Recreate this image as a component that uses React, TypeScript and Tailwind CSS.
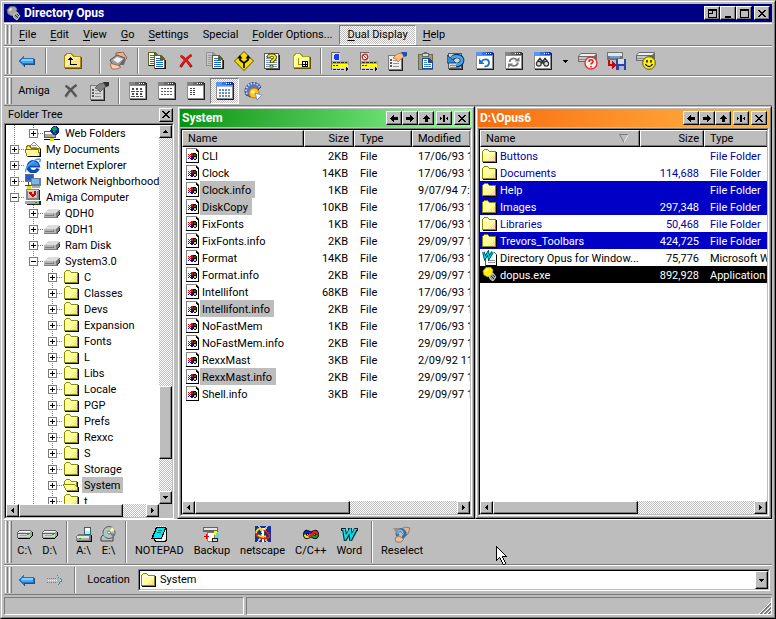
import React from "react";

type Palette = Record<string, string>;

/* Draws a small bitmap from rows of characters; runs of one colour become one rect. */
function Pixels({ rows, palette, className = "" }: { rows: string[]; palette: Palette; className?: string }) {
  const w = Math.max(...rows.map((r) => r.length));
  const rects: React.ReactNode[] = [];
  rows.forEach((row, y) => {
    let x = 0;
    while (x < row.length) {
      const c = row[x];
      let end = x + 1;
      while (end < row.length && row[end] === c) end++;
      if (palette[c]) rects.push(<rect key={`${x}-${y}`} x={x} y={y} width={end - x} height={1} fill={palette[c]} />);
      x = end;
    }
  });
  return (
    <svg width={w} height={rows.length} viewBox={`0 0 ${w} ${rows.length}`} shapeRendering="crispEdges" aria-hidden="true" className={`shrink-0 ${className}`}>
      {rects}
    </svg>
  );
}

function Art({ w, h, children, smooth = false }: { w: number; h: number; children: React.ReactNode; smooth?: boolean }) {
  return (
    <svg width={w} height={h} viewBox={`0 0 ${w} ${h}`} shapeRendering={smooth ? "auto" : "crispEdges"} aria-hidden="true" className="shrink-0">
      {children}
    </svg>
  );
}

const folderPalette = { o: "#8c8c00", y: "#ffff9c", p: "#ffd6a5", w: "#ffffde", k: "#000000" };

const Folder = () => (
  <Pixels
    palette={folderPalette}
    rows={[
      "..oooo.........",
      ".oyyyyo........",
      "oyyyyyyooooooo.",
      "owwwwwwwwwwwyok",
      "owyyyyyyyyyyyok",
      "owyyyyyyyyyyyok",
      "owyyyyyyyyypyok",
      "owyyyyyyyypypok",
      "owyyyyyyypyppok",
      "owyyyyyypypppok",
      "owyyyyypypyppok",
      "owyyyypypppppok",
      "ooooooooooooook",
      ".kkkkkkkkkkkkkk",
    ]}
  />
);

const OpenFolder = () => (
  <Pixels
    palette={folderPalette}
    rows={[
      "...oooo.........",
      "..oyyyyo........",
      ".oyyyyyyoooooo..",
      ".oyyyyyyyyyyyok.",
      ".oyyyyyyyyyyyok.",
      "ooooooooooooyok.",
      "owwwwwwwwwwwook.",
      ".oyyyyyyyyyypok.",
      ".owyyyyyyyypypok",
      "..oyyyyyyypyppok",
      "..owyyyyypyyppok",
      "...ooooooooooook",
      "....kkkkkkkkkkkk",
    ]}
  />
);

/* The tree shows a borderless drive; the launch bar shows one with a dark outline. */
const Drive = () => (
  <Pixels
    palette={{ l: "#dedede", m: "#b5b5b5", d: "#7b7b7b", k: "#313131", g: "#00d600" }}
    rows={[
      "....lllllllllll.",
      "...lllllllllllmd",
      "..lllllllllllmdd",
      ".lllllllllllmddk",
      "mmmmmmmmmmmmdddk",
      "mmmmmmmmmgmmdddk",
      "mdddddddddmmddk.",
      "mmmmmmmmmmmmdk..",
      "dddddddddddddd..",
    ]}
  />
);

const OutlinedDrive = () => (
  <Pixels
    palette={{ w: "#ffffff", l: "#d6d6d6", m: "#a5a5a5", d: "#636363", k: "#000000", g: "#00c600" }}
    rows={[
      "..dddddddddddd..",
      ".dwwwwwwwwwwwld.",
      "dwlllllllllllmmk",
      "dddddddddddddmmk",
      "dlllllllllgglmmk",
      "dllmmmmmmmlllmmk",
      "dllllllllllllmk.",
      "dmmmmmmmmmmmmk..",
      ".kkkkkkkkkkkk...",
    ]}
  />
);

const FileIcon = () => (
  <Pixels
    palette={{ m: "#848484", w: "#ffffff", k: "#000000", r: "#e70000", b: "#0000de", g: "#007b00", y: "#dede00", d: "#420042" }}
    rows={[
      "mmmmmmmmmmm..",
      "mwwwwwwwwwkm.",
      "mwwwwwwwwwkkm",
      "mwwwwwwwwwwkk",
      "mwwwwwwwwwwwk",
      "mwwwwrrkkkwwk",
      "mwrwrrrkggkwk",
      "mwwrwrrdggkwk",
      "mwrwrdddkkkwk",
      "mwwbwbbkyykwk",
      "mwbwbbbkyykwk",
      "mwwwwbbwkkwwk",
      "mwwwwwwwwwwwk",
      "mwwwwwwwwwwwk",
      "kkkkkkkkkkkkk",
    ]}
  />
);

const BackArrow = () => (
  <Art w={17} h={13}>
    <path d="M0 6L6 0V3H16V9H6V12Z" fill="#2173c6" />
    <path d="M2 6L5 3V4H15V6Z" fill="#84ceff" />
    <path d="M2 6H15V8H5V9Z" fill="#4aa5ef" />
    <path d="M6 9H16V10H7V12H6ZM16 4H17V10H16Z" fill="#314a73" />
  </Art>
);

const ForwardArrow = () => (
  <Art w={17} h={13}>
    <path d="M0 4.500H10M0 8.500H10" stroke="#7b7b7b" strokeDasharray="1 1" fill="none" />
    <path d="M1 6.500H15" stroke="#ffffff" strokeDasharray="1 1" />
    <path d="M10 1.500L15 6.500L10 11.500" stroke="#4a8c8c" strokeDasharray="1 1" fill="none" />
    <path d="M10 3L13 6L10 9Z" fill="#9cbdc6" />
  </Art>
);

const UpFolder = () => (
  <Art w={19} h={16}>
    <path d="M1 3L3 0H9L11 3H18V15H1Z" fill="#a58c18" />
    <path d="M2 4L4 1H8L10 4H17V14H2Z" fill="#ffef9c" />
    <path d="M2 14L17 4V14Z" fill="#ffde8c" />
    <path d="M18 4H19V16H2V15H18Z" fill="#63520a" />
    <path d="M5 7L7.500 4L10 7H8V11H14V12H7V7Z" fill="#000" />
  </Art>
);

const FolderTree = () => (
  <Art w={19} h={16}>
    <path d="M1 3L3 0H9L11 3H18V15H1Z" fill="#a5a518" />
    <path d="M2 4L4 1H8L10 4H17V14H2Z" fill="#ffff9c" />
    <path d="M18 4H19V16H2V15H18Z" fill="#63520a" />
    <path d="M6.500 5V11.500H11" fill="none" stroke="#b58400" strokeWidth="1" />
    <rect x="10.5" y="8.500" width="5" height="5" fill="#fff" stroke="#000" />
    <path d="M13 8.500V13.500M10.500 11H15.500" stroke="#000" />
  </Art>
);

const Hand = () => (
  <Art w={19} h={18} smooth>
    <path d="M7 1L14 0L18 6L14 10L7 8Z" fill="#e7b594" stroke="#8c5a42" strokeWidth="1" />
    <path d="M12 8L17 7L15 13L11 13Z" fill="#6b6b6b" />
    <path d="M1 8L8 3L16 6L10 14L3 12Z" fill="#9c9c9c" stroke="#5a5a5a" />
    <path d="M4 8L8 5L14 7L9 11Z" fill="#efefef" />
    <path d="M1 12C4 11 5 13 8 13L12 15L8 17H3Z" fill="#ffceb5" stroke="#a5735a" strokeWidth="1" />
  </Art>
);

const Page = ({ x, y, dim = false }: { x: number; y: number; dim?: boolean }) => (
  <g transform={`translate(${x} ${y})`}>
    <path d="M0 0H7L11 4V14H0Z" fill={dim ? "#949494" : "#636321"} />
    <path d="M1 1H6V5H10V13H1Z" fill={dim ? "#c6c6c6" : "#ffffff"} />
    <path d="M2 3H6V4H2ZM2 5H9V6H2ZM2 7H9V8H2ZM2 9H9V10H2ZM2 11H9V12H2Z" fill={dim ? "#9c9c9c" : "#2163de"} />
    <path d="M1 14H12V5H11V13H1Z" fill={dim ? "#8c8c8c" : "#181818"} />
  </g>
);

const CopyIcon = ({ dim = false }: { dim?: boolean }) => (
  <Art w={18} h={18}>
    <Page x={0} y={0} dim={dim} />
    <Page x={6} y={3} />
  </Art>
);

const Cross = ({ color, shade }: { color: string; shade: string }) => (
  <Art w={14} h={14} smooth>
    <path d="M2 2C5 4 10 9 12.500 13M12.500 1C8 4 4 9 1.500 13" stroke={shade} strokeWidth="2.600" fill="none" />
    <path d="M1.500 1.500C5 4 9 8 12 12M12.500 1C8 4 4 8 1.500 12" stroke={color} strokeWidth="1.800" fill="none" />
  </Art>
);

const Diamond = () => (
  <Art w={20} h={20} smooth>
    <path d="M10 0.500L19.500 10L10 19.500L0.500 10Z" fill="#f7de00" stroke="#5a4a00" />
    <path d="M10 17V12L6 9V6M10 12L14 9V6" stroke="#000" strokeWidth="1.600" fill="none" />
    <path d="M3.500 7.500L6 4L8.500 7.500ZM11.500 7.500L14 4L16.500 7.500Z" fill="#000" />
  </Art>
);

const HelpDoc = () => (
  <Art w={17} h={18}>
    <rect x="0" y="1" width="15" height="16" fill="#5a5a5a" />
    <rect x="1" y="2" width="13" height="14" fill="#ffffff" />
    <path d="M2 4.500H13M2 6.500H13M2 8.500H13M2 10.500H13M2 12.500H13M2 14.500H13" stroke="#7b94c6" />
    <path d="M15 3H16V18H2V17H15Z" fill="#212121" />
    <g shapeRendering="auto" fill="none">
      <path d="M4.500 6C4.500 2 11 2 11 5.500C11 8 7.500 8 7.500 11M7.500 13V15.500" stroke="#313100" strokeWidth="3.600" />
      <path d="M4.500 5.500C4.500 2.500 11 2.500 11 5.500C11 8 7.500 8 7.500 10.500M7.500 13.500V15" stroke="#ffe700" strokeWidth="2" />
    </g>
  </Art>
);

const LabelIcon = ({ red = false }: { red?: boolean }) => (
  <Art w={18} h={19}>
    <rect x="0" y="0" width="9" height="9" fill="#dedede" />
    <path d="M0 0H9V1H1V18H0Z" fill="#6b6b6b" />
    {red ? (
      <g fill="none" shapeRendering="auto">
        <circle cx="5" cy="5" r="2.800" fill="#ffffff" stroke="#ce2121" strokeWidth="1.200" />
        <path d="M3 3L7 7" stroke="#ce2121" />
      </g>
    ) : (
      <path d="M4 2H7L8 3V7L7 8H4L3 7V3Z" fill="#1839f7" />
    )}
    <rect x="1" y="9" width="17" height="4" fill="#a5a594" />
    <path d="M2 10.500H16" stroke="#313131" strokeDasharray="3 1" />
    <rect x="1" y="12" width="16" height="4" fill="#ffff00" />
    <path d="M2 13.500H8" stroke="#313100" strokeDasharray="2 1" />
    <rect x="1" y="16" width="17" height="3" fill="#cecece" />
    <path d="M2 17.500H13" stroke="#212121" strokeDasharray="3 1" />
    <path d="M15 15L18 17L15 19Z" fill="#000" />
  </Art>
);

const HandList = ({ grey = false }: { grey?: boolean }) => (
  <Art w={19} h={19}>
    <rect x="0" y="3" width="14" height="15" fill="#7b7b7b" />
    <rect x="1" y="4" width="12" height="13" fill={grey ? "#d6d6d6" : "#efefef"} />
    <path d="M2 8H4M2 11H4M2 14H4" stroke="#5a5a5a" strokeWidth="2" />
    <path d="M5 8.500H11M5 11.500H11M5 14.500H11" stroke="#949494" />
    <path d="M14 5H15V19H1V18H14Z" fill="#212121" />
    <g shapeRendering="auto">
      <path d="M5 6L9 2L14 1L17 4L13 7L10 10L8 7Z" fill={grey ? "#848484" : "#f7bd84"} stroke={grey ? "#525252" : "#b57331"} strokeWidth="0.800" />
      <path d="M13 0H19V4L16 5Z" fill={grey ? "#313131" : "#1852b5"} />
    </g>
  </Art>
);

const Clipboard = () => (
  <Art w={17} h={19}>
    <rect x="0" y="2" width="15" height="16" fill="#6b6b4a" />
    <rect x="1" y="3" width="13" height="14" fill="#9c9c84" />
    <path d="M4 1H6V0H9V1H11V5H4Z" fill="#6b6b6b" />
    <path d="M5 2H10V4H5Z" fill="#d6d6d6" />
    <path d="M4 6H11L15 10V17H4Z" fill="#214a8c" />
    <path d="M5 7H10V11H14V16H5Z" fill="#fff" />
    <path d="M6 8.500H9M6 10.500H9M6 12.500H13M6 14.500H13" stroke="#4284d6" />
  </Art>
);

const UndoDoc = () => (
  <Art w={18} h={18}>
    <rect x="1" y="1" width="14" height="16" fill="#5a5a5a" />
    <rect x="2" y="2" width="12" height="14" fill="#d6d6d6" />
    <path d="M3 13.500H13M3 15.500H13" stroke="#8c8c8c" />
    <path d="M15 13H16V18H2V17H15Z" fill="#212121" />
    <g shapeRendering="auto">
      <path d="M5 7C8 2 16 4 15 9C14.500 12 12 13 9 13" fill="none" stroke="#003973" strokeWidth="4.600" />
      <path d="M4 7C7 3 15 4 15 8.500C15 11 12 12.500 9 12.500" fill="none" stroke="#4aa5e7" strokeWidth="2.800" />
      <path d="M0 3V11H9L5.500 7.500Z" fill="#318cd6" stroke="#003973" strokeWidth="0.800" />
    </g>
  </Art>
);

const WinFrame = ({ blue, children }: { blue: boolean; children: React.ReactNode }) => (
  <Art w={18} h={18}>
    <rect x="0" y="0" width="17" height="17" fill="#8c8c8c" />
    <rect x="1" y="4" width="15" height="12" fill="#ffffff" />
    <rect x="0" y="0" width="9" height="3" fill={blue ? "#5a94f7" : "#848484"} />
    <rect x="6" y="0" width="5" height="3" fill={blue ? "#3973de" : "#6b6b6b"} />
    <rect x="11" y="0" width="6" height="3" fill={blue ? "#1839ad" : "#424242"} />
    <path d="M10 1.500H16" stroke="#fff" strokeDasharray="1 1" />
    <path d="M17 1H18V18H1V17H17Z" fill="#212121" />
    {children}
  </Art>
);

const RefreshWin = ({ blue }: { blue: boolean }) => (
  <WinFrame blue={blue}>
    {blue ? (
      <g shapeRendering="auto">
        <path d="M5.500 9.500C8 6 13 7 13 10.500C13 13 11 14.500 8.500 14.500" fill="none" stroke="#1873c6" strokeWidth="1.800" />
        <path d="M3 6.500V12H8.500Z" fill="#1873c6" />
      </g>
    ) : (
      <g shapeRendering="auto">
        <path d="M4.500 10C5 6 9.500 5.500 12 8M13 10.500C12.500 14 8 15 5.500 12.500" fill="none" stroke="#7b7b7b" strokeWidth="1.800" />
        <path d="M9.500 9.500H14.500V5ZM8 11.500H3V16Z" fill="#7b7b7b" />
      </g>
    )}
  </WinFrame>
);

const FindWin = () => (
  <WinFrame blue>
    <g shapeRendering="auto" fill="none" stroke="#313131">
      <circle cx="4.800" cy="11.800" r="2.400" fill="#dedede" strokeWidth="1.200" />
      <circle cx="12.200" cy="11.800" r="2.400" fill="#dedede" strokeWidth="1.200" />
      <path d="M3.500 9.500L6 6.500L8.500 10L11 6.500L13.500 9.500M7 11H10" strokeWidth="1.600" />
    </g>
  </WinFrame>
);

const ViewWin = ({ kind, blue = false }: { kind: number; blue?: boolean }) => (
  <WinFrame blue={blue}>
    {kind === 0 && (
      <path
        d="M3 6H5V8H3ZM7 6H9V8H7ZM11 6H13V8H11ZM2 9H6V10H2ZM6.500 9H10V10H7ZM11 9H14V10H11ZM3 11H5V13H3ZM7 11H9V13H7ZM11 11H13V13H11ZM2 14H6V15H2ZM7 14H10V15H7ZM11 14H14V15H11Z"
        fill="#4a4a4a"
      />
    )}
    {kind === 1 && <path d="M3 6.500H14M3 9.500H14M3 12.500H14" stroke="#5a5a5a" strokeDasharray="2 1" />}
    {kind === 2 && <path d="M3 6.500H8M3 8.500H8M3 10.500H8M3 12.500H8" stroke="#424242" strokeDasharray="2 1" />}
    {kind === 3 && (
      <g>
        <path d="M1 4.500H16" stroke="#9cbde7" />
        <path d="M3 7.500H15M3 10.500H15M3 13.500H15" stroke="#6b8cbd" strokeWidth="2" strokeDasharray="2 1" />
      </g>
    )}
  </WinFrame>
);

const Gauge = () => (
  <Art w={20} h={19} smooth>
    <path d="M2 13A8 8 0 1 1 17 5L14 8L7 15Z" fill="#5a73bd" stroke="#31427b" />
    <path d="M3 12A7 7 0 0 1 15.500 5" fill="none" stroke="#c6d6ff" strokeWidth="2" strokeDasharray="1.500 1.500" />
    <circle cx="10" cy="11" r="5" fill="#ffc621" stroke="#c67300" />
    <path d="M11 11L18 13L13 18Z" fill="#eff7ff" stroke="#8494bd" />
    <circle cx="9" cy="10" r="1.800" fill="#fff7ad" />
  </Art>
);

const BigDrive = () => (
  <g>
    <path d="M0 3L3 0H18L19 1V7L17 9H0Z" fill="#6b6b6b" />
    <path d="M1 3L3 1H18L16 3Z" fill="#efefef" />
    <rect x="1" y="4" width="15" height="4" fill="#c6c6c6" />
    <path d="M1 6.500H13" stroke="#8c8c8c" />
    <rect x="14" y="4" width="2" height="1" fill="#00b500" />
  </g>
);

const DriveQuestion = () => (
  <Art w={20} h={17} smooth>
    <BigDrive />
    <circle cx="13" cy="10" r="6" fill="#ffefef" stroke="#e73131" strokeWidth="1.400" />
    <path d="M11 9C11 6 15 6 15 8.500C15 10 13 10 13 11.500M13 13V14.500" stroke="#d62121" strokeWidth="1.600" fill="none" />
  </Art>
);

const DriveSmile = () => (
  <Art w={20} h={18} smooth>
    <BigDrive />
    <circle cx="13" cy="11" r="6.300" fill="#ffef18" stroke="#5a5a00" strokeWidth="1" />
    <path d="M11 8V10.500M15 8V10.500" stroke="#000" strokeWidth="1.400" />
    <path d="M9.500 12C11 15.500 15 15.500 16.500 12" stroke="#000" strokeWidth="1.200" fill="none" />
  </Art>
);

const DriveSave = () => (
  <Art w={19} h={18}>
    <rect x="0" y="0" width="16" height="8" fill="#737373" />
    <rect x="1" y="1" width="14" height="3" fill="#e7e7e7" />
    <path d="M3 5H13" stroke="#5aa5e7" strokeWidth="2" />
    <rect x="9" y="7" width="10" height="11" fill="#31429c" />
    <rect x="11" y="7" width="6" height="5" fill="#d6def7" />
    <rect x="12" y="14" width="5" height="4" fill="#adb5de" />
    <path d="M1 8H3V12H5V9L9 13L5 17V14H1Z" fill="#c60808" />
  </Art>
);

const AppIcon = ({ gold = false }: { gold?: boolean }) => (
  <Art w={15} h={15} smooth>
    <path d="M1 4L4 0.500H9L11 3L10 7L6 10L2 8Z" fill={gold ? "#ffef00" : "#a5a5a5"} stroke={gold ? "#bda500" : "#636363"} strokeWidth="0.800" />
    <path d="M3 4L5 2L6 3L4 5Z" fill="#fff" />
    <path d="M7 9L11 6L14 10L11 14L8 12Z" fill="#9c9c9c" stroke="#e7e7e7" strokeWidth="0.800" />
    <path d="M9 9L12 12M11 8L13 10" stroke="#313131" />
  </Art>
);

const WordDoc = () => (
  <Art w={15} h={16}>
    <path d="M3 1H11L14 4V15H3Z" fill="#fff" stroke="#5a5a5a" />
    <path d="M6 10.500H13M6 12.500H13" stroke="#949494" />
    <path d="M0 1H12L10 9H1Z" fill="#bdffff" />
    <path d="M14 5H15V16H4V15H14Z" fill="#000" />
    <g shapeRendering="auto" fill="none">
      <path d="M1.500 2L3 8L6 3L7 8L10.500 2" stroke="#003142" strokeWidth="2.600" />
      <path d="M1.500 2L3 8L6 3L7 8L10.500 2" stroke="#00ced6" strokeWidth="1.200" />
    </g>
  </Art>
);

const WebFolder = () => (
  <Art w={16} h={15}>
    <path d="M0 5H11V11H0Z" fill="#a5a5a5" stroke="#5a5a5a" />
    <path d="M1 7H9" stroke="#fff" strokeWidth="2" />
    <circle cx="11" cy="4.500" r="4.500" fill="#1821ad" />
    <path d="M8 2L12 0L13 3L11 5L12 8L9 6Z" fill="#00a542" />
    <path d="M0 13.500H16" stroke="#000" />
    <rect x="6" y="12" width="4" height="3" fill="#dede00" />
  </Art>
);

const DocsFolder = () => (
  <Art w={16} h={15}>
    <path d="M4 5L9 0L14 5V9H4Z" fill="#fff" stroke="#848484" />
    <path d="M6 5H12M7 3.500H11" stroke="#5a9ce7" />
    <path d="M1 5L4 3L6 6H15V14H2Z" fill="#ffe77b" stroke="#8c7b00" />
    <path d="M0 7H13L15 14H2Z" fill="#fff79c" stroke="#8c7b00" />
    <path d="M15 7H16V15H3V14H15Z" fill="#000" />
  </Art>
);

const Explorer = () => (
  <Art w={16} h={15} smooth>
    <path d="M13 10.500A5 5 0 1 1 13.200 7.800H5" fill="none" stroke="#104aad" strokeWidth="3.600" />
    <path d="M4 8A4.500 4.500 0 0 1 12.500 7H5.500" fill="none" stroke="#4294f7" strokeWidth="1.600" />
    <path d="M1 14C-1 11 8 1 14.500 1C16 1.500 15 3 14.500 4" fill="none" stroke="#42a5ff" strokeWidth="1.600" />
  </Art>
);

const Network = () => (
  <Art w={16} h={15}>
    <rect x="0" y="0" width="9" height="8" fill="#5a738c" />
    <rect x="1" y="1" width="7" height="5" fill="#215ad6" />
    <rect x="6" y="4" width="10" height="8" fill="#7b7b7b" />
    <rect x="7" y="5" width="7" height="5" fill="#63bdff" />
    <path d="M7 12H15V14H7Z" fill="#adadad" />
    <path d="M0 11.500H6M3.500 8V15" stroke="#424242" />
    <rect x="2" y="12" width="4" height="3" fill="#dede00" />
  </Art>
);

const AmigaComputer = () => (
  <Art w={16} h={16}>
    <rect x="1" y="0" width="13" height="11" fill="#848484" />
    <rect x="2" y="1" width="11" height="1" fill="#dedede" />
    <rect x="3" y="2" width="9" height="7" fill="#c6c6c6" />
    <path d="M4 3H7V5H9V2H11V5L9 8H7L5 6Z" fill="#de0000" />
    <path d="M0 12H14V15H0Z" fill="#a5a5a5" />
    <path d="M14 1H15V11H14ZM14 12H16V16H2V15H14Z" fill="#212121" />
    <rect x="10" y="13" width="2" height="1" fill="#00a500" />
  </Art>
);

const CdDrive = () => (
  <Art w={17} h={16} smooth>
    <path d="M1 11L3 9H13V15H1Z" fill="#bdbdbd" stroke="#424242" />
    <circle cx="9" cy="6.500" r="6" fill="#b5c6bd" stroke="#5a5a5a" />
    <path d="M9 6.500L12 1L15 4Z" fill="#f7f7b5" />
    <path d="M9 6.500L3 8L5 11Z" fill="#7bdede" />
    <path d="M9 6.500L13 11L15 8Z" fill="#737b8c" />
    <circle cx="9" cy="6.500" r="1.500" fill="#fff" stroke="#4a4a4a" strokeWidth="0.700" />
  </Art>
);

const FloppyDrive = () => (
  <Art w={16} h={15}>
    <path d="M0 9L2 7H15V14H0Z" fill="#7b7b7b" />
    <rect x="1" y="9" width="12" height="2" fill="#e7e7e7" />
    <rect x="1" y="11" width="12" height="2" fill="#adadad" />
    <rect x="3" y="11" width="2" height="1" fill="#00a500" />
    <path d="M8 0H15V8H8Z" fill="#31636b" />
    <path d="M9 1H14V4H9Z" fill="#fff" />
    <path d="M9 4H14V7H9Z" fill="#a5f7ff" />
    <path d="M15 8H16V15H1V14H15Z" fill="#000" />
  </Art>
);

const Notepad = () => (
  <Art w={16} h={16}>
    <path d="M5 1H15L16 3V14L14 16H4L3 13H0Z" fill="#000" />
    <path d="M6 2H14L10 12H2Z" fill="#00e7ef" />
    <path d="M11 12L15 3V13L13 15H5L4 13H11Z" fill="#efefef" />
    <path d="M7 4.500H11M6 6.500H10" stroke="#007b7b" />
    <path d="M5 .5H15" stroke="#fff" strokeDasharray="1 1" />
  </Art>
);

const Backup = () => (
  <Art w={17} h={16}>
    <path d="M0 1H15V6H0Z" fill="#636363" />
    <path d="M1 2H14V4H1Z" fill="#e7e7e7" />
    <path d="M4 6H11V15H5Z" fill="#fff" stroke="#7b7b7b" />
    <path d="M3 8H4V10H6V11H4V13H3V11H1V10H3Z" fill="#e70000" />
    <path d="M11 5H14V9H11Z" fill="#ffff00" />
    <path d="M13 7H16V12H13Z" fill="#63d6e7" />
    <path d="M9 12H14V15H9Z" fill="#d6d6d6" stroke="#212121" />
  </Art>
);

const Netscape = () => (
  <Art w={16} h={16}>
    <path d="M0 0H16V16H0Z" fill="#1031a5" />
    <path d="M4 0L12 16M12 0L3 16" stroke="#bdbdbd" strokeWidth="2" />
    <path d="M7 2H10V16H7Z" fill="#fff" />
    <path d="M9 5H10V16H9Z" fill="#424242" />
    <g shapeRendering="auto" fill="none">
      <path d="M1 6C1 12 8 13 13 12C17 10 12 5 8 4" stroke="#e72100" strokeWidth="1.800" />
      <path d="M1 7C2 2 6 2 9 4M3 9C6 11 9 11 11 10" stroke="#ffde00" strokeWidth="1.600" />
    </g>
  </Art>
);

const CppIcon = () => (
  <Art w={16} h={11} smooth>
    <path d="M8 5.500C6 2.500 2 1.500 2 5.500S6 8.500 8 5.500" fill="none" stroke="#000" strokeWidth="4" />
    <path d="M8 5.500C10 2.500 14 1.500 14 5.500S10 8.500 8 5.500" fill="none" stroke="#000" strokeWidth="4" />
    <path d="M8 5.500C6 2.500 2 1.500 2 5.500" fill="none" stroke="#0029e7" strokeWidth="2.400" />
    <path d="M2 5.500C2 9 6 8.500 8 5.500" fill="none" stroke="#f7e700" strokeWidth="2.400" />
    <path d="M8 5.500C10 8.500 14 9 14 5.500" fill="none" stroke="#00a521" strokeWidth="2.400" />
    <path d="M6 8L11 3C12 2.500 14 3 14 5.500" fill="none" stroke="#f71818" strokeWidth="2.400" />
  </Art>
);

const WordIcon = () => (
  <Art w={17} h={13} smooth>
    <path d="M0 1.500H5M7 1.500H11M13 1.500H17" stroke="#002931" strokeWidth="3" />
    <path d="M3 1L4.500 10.500L9 3L10 10.500L15 1" stroke="#002931" strokeWidth="4" fill="none" />
    <path d="M1 1.500H4.500M13.500 1.500H16" stroke="#00dee7" strokeWidth="1.200" />
    <path d="M3 1L4.500 10L9 2L10 10L14.500 1" stroke="#00dee7" strokeWidth="2" fill="none" />
  </Art>
);

const Reselect = () => (
  <Art w={18} h={17} smooth>
    <path d="M6 4L12 1L17 2L15 8L12 10Z" fill="#e7b58c" stroke="#8c6b4a" strokeWidth="0.800" />
    <path d="M2 12L6 10L11 13L8 16H3Z" fill="#efbd94" stroke="#8c6b4a" strokeWidth="0.800" />
    <path d="M5 10C2 5 8 2 11 5C14 8 11 11 9 11" fill="none" stroke="#2973b5" strokeWidth="3" />
    <path d="M5 8C4 4 8 3 10 6" fill="none" stroke="#84c6f7" strokeWidth="1.200" />
    <path d="M0 2L6 2L4 8Z" fill="#9c8c84" />
  </Art>
);

const ink = { k: "#000000" };
const CloseGlyph = () => <Pixels palette={ink} rows={["kk....kk", ".kk..kk.", "..kkkk..", "...kk...", "..kkkk..", ".kk..kk.", "kk....kk"]} />;
const LeftGlyph = () => <Pixels palette={ink} rows={["...k....", "..kk....", ".kkkkkkk", "kkkkkkkk", ".kkkkkkk", "..kk....", "...k...."]} />;
const RightGlyph = () => <Pixels palette={ink} rows={["....k...", "....kk..", "kkkkkkk.", "kkkkkkkk", "kkkkkkk.", "....kk..", "....k..."]} />;
const UpGlyph = () => <Pixels palette={ink} rows={["...k...", "..kkk..", ".kkkkk.", "kkkkkkk", "..kkk..", "..kkk..", "..kkk.."]} />;
const SplitGlyph = () => <Pixels palette={ink} rows={["...kk...", "...kk...", "k..kk..k", "kk.kk.kk", "k..kk..k", "...kk...", "...kk..."]} />;
const TriLeft = () => <Pixels palette={ink} rows={["..k", ".kk", "kkk", ".kk", "..k"]} />;
const TriRight = () => <Pixels palette={ink} rows={["k..", "kk.", "kkk", "kk.", "k.."]} />;
const TriUp = () => <Pixels palette={ink} rows={["..k..", ".kkk.", "kkkkk"]} />;
const TriDown = () => <Pixels palette={ink} rows={["kkkkk", ".kkk.", "..k.."]} />;

const raised =
  "border border-t-white border-l-white border-r-black border-b-black bg-[#bdbdbd] shadow-[inset_-1px_-1px_0_#7b7b7b] flex items-center justify-center shrink-0";
const dither = "bg-[repeating-conic-gradient(#ffffff_0_25%,#bdbdbd_0_50%)] bg-[length:2px_2px]";

function Bevel({ label, children, className = "h-[14px] w-4" }: { label: string; children?: React.ReactNode; className?: string }) {
  return (
    <button type="button" aria-label={label} className={`${raised} ${className}`}>
      {children}
    </button>
  );
}

const Ridge = () => <span className="w-[3px] border-l border-r border-l-white border-r-[#7b7b7b]" />;

const Grip = () => (
  <div className="ml-px flex gap-px self-stretch py-px">
    <Ridge />
    <Ridge />
  </div>
);

const Sep = () => <div className="ml-1 mr-[3px] my-px w-[2px] shrink-0 self-stretch border-l border-r border-l-[#7b7b7b] border-r-white" />;

function Bar({ className, label, children }: { className: string; label: string; children: React.ReactNode }) {
  return (
    <div role="toolbar" aria-label={label} className={`flex shrink-0 items-center border-t border-b border-t-white border-b-[#7b7b7b] ${className}`}>
      <Grip />
      {children}
    </div>
  );
}

function Tool({ label, children, className = "w-[29px]", pressed = false }: { label: string; children: React.ReactNode; className?: string; pressed?: boolean }) {
  return (
    <button
      type="button"
      aria-label={label}
      aria-pressed={pressed || undefined}
      className={`flex h-[26px] shrink-0 items-center justify-center ${className} ${
        pressed ? `border border-t-[#7b7b7b] border-l-[#7b7b7b] border-r-white border-b-white ${dither}` : ""
      }`}
    >
      {children}
    </button>
  );
}

function HScroll({ thumb, rest }: { thumb: string; rest: string }) {
  return (
    <div className="flex h-[13px] shrink-0">
      <Bevel label="Scroll left" className="w-[13px]">
        <TriLeft />
      </Bevel>
      <div className={`flex min-w-0 flex-1 ${dither}`}>
        <div className={`${raised} basis-0 ${thumb}`} />
        <div className={`basis-0 ${rest}`} />
      </div>
      <Bevel label="Scroll right" className="w-[13px]">
        <TriRight />
      </Bevel>
    </div>
  );
}

const menus: [string, string][] = [
  ["F", "ile"],
  ["E", "dit"],
  ["V", "iew"],
  ["G", "o"],
  ["S", "ettings"],
  ["", "Special"],
  ["F", "older Options..."],
  ["D", "ual Display"],
  ["H", "elp"],
];

type Node = { depth: number; label: string; icon: React.ReactNode; open?: boolean; guides: boolean[]; down?: boolean; selected?: boolean };

const nodes: Node[] = [
  { depth: 1, label: "Web Folders", icon: <WebFolder />, guides: [true], down: false },
  { depth: 0, label: "My Documents", icon: <DocsFolder />, guides: [] },
  { depth: 0, label: "Internet Explorer", icon: <Explorer />, guides: [] },
  { depth: 0, label: "Network Neighborhood", icon: <Network />, guides: [] },
  { depth: 0, label: "Amiga Computer", icon: <AmigaComputer />, guides: [], open: true },
  { depth: 1, label: "QDH0", icon: <Drive />, guides: [true] },
  { depth: 1, label: "QDH1", icon: <Drive />, guides: [true] },
  { depth: 1, label: "Ram Disk", icon: <Drive />, guides: [true] },
  { depth: 1, label: "System3.0", icon: <Drive />, guides: [true], open: true },
  ...["C", "Classes", "Devs", "Expansion", "Fonts", "L", "Libs", "Locale", "PGP", "Prefs", "Rexxc", "S", "Storage", "System", "t"].map((label) => ({
    depth: 2,
    label,
    icon: label === "System" ? <OpenFolder /> : <Folder />,
    guides: [true, true],
    selected: label === "System",
  })),
];

const Guide = () => (
  <Art w={19} h={16}>
    <path d="M8.500 0V16" stroke="#7b7b7b" strokeDasharray="1 1" />
  </Art>
);

const Expander = ({ open = false, down = true }: { open?: boolean; down?: boolean }) => (
  <Art w={19} h={16}>
    <path d={down ? "M8.500 0V16" : "M8.500 0V8"} stroke="#7b7b7b" strokeDasharray="1 1" />
    <path d="M13 8.500H19" stroke="#7b7b7b" strokeDasharray="1 1" />
    <rect x="4.500" y="4.500" width="8" height="8" fill="#fff" stroke="#7b7b7b" />
    <path d={open ? "M6 8.500H11" : "M6 8.500H11M8.500 6V11"} stroke="#000" />
  </Art>
);

function FolderTreePanel() {
  return (
    <section aria-label="Folder Tree" className="flex w-[170px] shrink-0 flex-col">
      <div className="flex h-[17px] shrink-0 items-center justify-between pl-1 pr-px">
        <h2>Folder Tree</h2>
        <Bevel label="Close folder tree" className="h-[14px] w-[14px]">
          <CloseGlyph />
        </Bevel>
      </div>
      <div className="flex min-h-0 flex-1 flex-col border border-t-[#7b7b7b] border-l-[#7b7b7b] border-r-white border-b-white">
        <div className="flex min-h-0 flex-1 flex-col border border-t-black border-l-black border-r-[#bdbdbd] border-b-[#bdbdbd]">
          <div className="flex min-h-0 flex-1">
            <ul className="min-w-0 flex-1 overflow-hidden bg-white">
              {nodes.map((n) => (
                <li key={n.label} className="flex h-4 items-center whitespace-nowrap">
                  {n.guides.map((_, i) => (
                    <Guide key={i} />
                  ))}
                  <Expander open={n.open} down={n.down} />
                  <span className="flex w-4 shrink-0 items-center justify-center">{n.icon}</span>
                  <span className={`ml-[3px] px-[2px] pt-[2px] leading-[14px] ${n.selected ? "bg-[#bdbdbd]" : ""}`}>{n.label}</span>
                </li>
              ))}
            </ul>
            <div className="flex w-[13px] shrink-0 flex-col">
              <Bevel label="Scroll up" className="h-[13px]">
                <TriUp />
              </Bevel>
              <div className={`flex min-h-0 flex-1 flex-col ${dither}`}>
                <div className="grow-[249] basis-0" />
                <div className={`${raised} grow-[72] basis-0`} />
                <div className="grow-[32] basis-0" />
              </div>
              <Bevel label="Scroll down" className="h-[13px]">
                <TriDown />
              </Bevel>
            </div>
          </div>
          <div className="mr-[13px]">
            <HScroll thumb="grow-[104]" rest="grow-[23]" />
          </div>
        </div>
      </div>
    </section>
  );
}

function Pane({ title, gradient, basis, scroll, children }: { title: string; gradient: string; basis: string; scroll: React.ReactNode; children: React.ReactNode }) {
  return (
    <section aria-label={title} className={`flex min-w-0 grow flex-col border border-t-[#bdbdbd] border-l-[#bdbdbd] border-r-black border-b-black ${basis}`}>
      <div className="flex min-h-0 flex-1 flex-col border border-t-white border-l-white border-r-[#7b7b7b] border-b-[#7b7b7b] p-px">
        <div className={`mb-px flex h-[18px] shrink-0 items-center pl-[2px] pr-[2px] ${gradient}`}>
          <h2 className="flex-1 text-[12px] font-bold text-white">{title}</h2>
          <Bevel label="Back">
            <LeftGlyph />
          </Bevel>
          <Bevel label="Forward">
            <RightGlyph />
          </Bevel>
          <Bevel label="Parent">
            <UpGlyph />
          </Bevel>
          <span className="w-[2px]" />
          <Bevel label="Split">
            <SplitGlyph />
          </Bevel>
          <span className="w-[2px]" />
          <Bevel label="Close">
            <CloseGlyph />
          </Bevel>
        </div>
        <div className="flex min-h-0 flex-1 flex-col border border-t-[#7b7b7b] border-l-[#7b7b7b] border-r-white border-b-white">
          <div className="flex min-h-0 flex-1 flex-col border border-t-black border-l-black border-r-[#bdbdbd] border-b-[#bdbdbd]">
            <div className="min-h-0 flex-1 overflow-hidden bg-white">{children}</div>
            {scroll}
          </div>
        </div>
      </div>
    </section>
  );
}

function Th({ children, className = "" }: { children: React.ReactNode; className?: string }) {
  return (
    <th scope="col" className="p-0 text-left font-normal">
      <div className={`flex h-[17px] items-center overflow-hidden border border-t-white border-l-white border-r-black border-b-black bg-[#bdbdbd] pl-[5px] pr-1 leading-4 shadow-[inset_-1px_-1px_0_#7b7b7b] ${className}`}>
        {children}
      </div>
    </th>
  );
}

const leftFiles: [string, string, string, boolean?][] = [
  ["CLI", "2KB", "17/06/93 1"],
  ["Clock", "14KB", "17/06/93 1"],
  ["Clock.info", "1KB", "9/07/94 7:", true],
  ["DiskCopy", "10KB", "17/06/93 1", true],
  ["FixFonts", "1KB", "17/06/93 1"],
  ["FixFonts.info", "2KB", "29/09/97 1"],
  ["Format", "14KB", "17/06/93 1"],
  ["Format.info", "2KB", "29/09/97 1"],
  ["Intellifont", "68KB", "17/06/93 1"],
  ["Intellifont.info", "2KB", "29/09/97 1", true],
  ["NoFastMem", "1KB", "17/06/93 1"],
  ["NoFastMem.info", "2KB", "29/09/97 1"],
  ["RexxMast", "3KB", "2/09/92 11"],
  ["RexxMast.info", "2KB", "29/09/97 1", true],
  ["Shell.info", "3KB", "29/09/97 1"],
];

const folderRow = "text-[#0000a5]";
const selectedRow = "bg-[#0000c6] text-white";

const rightFiles: { name: string; size: string; type: string; tone: string; icon: React.ReactNode }[] = [
  { name: "Buttons", size: "", type: "File Folder", tone: folderRow, icon: <Folder /> },
  { name: "Documents", size: "114,688", type: "File Folder", tone: folderRow, icon: <Folder /> },
  { name: "Help", size: "", type: "File Folder", tone: selectedRow, icon: <Folder /> },
  { name: "Images", size: "297,348", type: "File Folder", tone: selectedRow, icon: <Folder /> },
  { name: "Libraries", size: "50,468", type: "File Folder", tone: folderRow, icon: <Folder /> },
  { name: "Trevors_Toolbars", size: "424,725", type: "File Folder", tone: selectedRow, icon: <Folder /> },
  { name: "Directory Opus for Window...", size: "75,776", type: "Microsoft W", tone: "", icon: <WordDoc /> },
  { name: "dopus.exe", size: "892,928", type: "Application", tone: "bg-black text-white", icon: <AppIcon gold /> },
];

function Launcher({ label, children, className = "px-[5px]" }: { label: string; children: React.ReactNode; className?: string }) {
  return (
    <button type="button" className={`flex shrink-0 flex-col items-center ${className}`}>
      <span className="flex h-[18px] items-center">{children}</span>
      <span className="leading-4">{label}</span>
    </button>
  );
}

export default function App() {
  return (
    <div className="relative flex h-screen w-full flex-col overflow-hidden border border-t-[#bdbdbd] border-l-[#bdbdbd] border-r-black border-b-black bg-[#bdbdbd] font-['Roboto',sans-serif] text-[11px] leading-4 text-black">
      <div className="flex min-h-0 flex-1 flex-col border border-t-white border-l-white border-r-[#7b7b7b] border-b-[#7b7b7b] p-[2px]">
        <header className="mb-px flex h-[18px] shrink-0 items-center bg-[#000084] pl-[2px] pr-[2px]">
          <AppIcon />
          <h1 className="ml-[3px] flex-1 text-[12px] font-bold text-white">Directory Opus</h1>
          <Bevel label="Toggle layout">
            <Art w={9} h={9}>
              <path d="M0 0H9V9H0ZM1 2V8H8V2Z" fill="#000" fillRule="evenodd" />
              <path d="M1 5H5V2H4V4H1Z" fill="#000" />
            </Art>
          </Bevel>
          <Bevel label="Minimize">
            <Art w={9} h={9}>
              <rect x="1" y="7" width="6" height="2" fill="#000" />
            </Art>
          </Bevel>
          <Bevel label="Maximize">
            <Art w={9} h={9}>
              <path d="M0 0H9V9H0ZM1 2V8H8V2Z" fill="#000" fillRule="evenodd" />
            </Art>
          </Bevel>
          <span className="w-[2px]" />
          <Bevel label="Close window">
            <CloseGlyph />
          </Bevel>
        </header>

        <Bar className="h-[23px]" label="Menu">
          <nav className="flex items-center">
            {menus.map(([key, rest]) => (
              <button
                key={key + rest}
                type="button"
                className={`h-5 whitespace-nowrap px-[7px] leading-4 ${
                  key === "D" ? `border border-t-[#7b7b7b] border-l-[#7b7b7b] border-r-white border-b-white ${dither}` : ""
                }`}
              >
                {key && <span className="underline underline-offset-2">{key}</span>}
                {rest}
              </button>
            ))}
          </nav>
        </Bar>

        <Bar className="h-[30px]" label="Operations">
          <Tool label="Back"><BackArrow /></Tool>
          <Sep />
          <Tool label="Up one folder" className="w-[45px]"><UpFolder /></Tool>
          <Sep />
          <Tool label="Select"><Hand /></Tool>
          <Sep />
          <Tool label="Copy"><CopyIcon /></Tool>
          <Tool label="Delete"><Cross color="#e71818" shade="#8c1010" /></Tool>
          <Tool label="Duplicate"><CopyIcon dim /></Tool>
          <Tool label="Move"><Diamond /></Tool>
          <Tool label="Properties"><HelpDoc /></Tool>
          <Tool label="Create folder"><FolderTree /></Tool>
          <Sep />
          <Tool label="Select label"><LabelIcon /></Tool>
          <Tool label="Clear label"><LabelIcon red /></Tool>
          <Tool label="Edit list"><HandList /></Tool>
          <Tool label="Paste"><Clipboard /></Tool>
          <Tool label="Undo"><UndoDoc /></Tool>
          <Tool label="Restore view"><RefreshWin blue /></Tool>
          <Tool label="Refresh"><RefreshWin blue={false} /></Tool>
          <Tool label="Find"><FindWin /></Tool>
          <Tool label="Find options" className="w-4"><TriDown /></Tool>
          <Tool label="Drive information"><DriveQuestion /></Tool>
          <Tool label="Copy disk"><DriveSave /></Tool>
          <Tool label="Format disk"><DriveSmile /></Tool>
        </Bar>

        <Bar className="h-[30px]" label="Amiga">
          <span className="w-11 text-center">Amiga</span>
          <Tool label="Amiga delete"><Cross color="#525252" shade="#737373" /></Tool>
          <Tool label="Amiga edit"><HandList grey /></Tool>
          <Sep />
          <Tool label="Large icons"><ViewWin kind={0} /></Tool>
          <Tool label="Small icons"><ViewWin kind={1} /></Tool>
          <Tool label="List"><ViewWin kind={2} /></Tool>
          <Tool label="Details" pressed><ViewWin kind={3} blue /></Tool>
          <Tool label="Options"><Gauge /></Tool>
        </Bar>

        <main className="flex min-h-0 flex-1">
          <FolderTreePanel />
          <div className="w-[3px] shrink-0" />
          <Pane title="System" gradient="bg-linear-to-r from-[#00940a] via-[#4ac652] to-[#94ff9c]" basis="basis-[298px]" scroll={<HScroll thumb="grow-[154]" rest="grow-[108]" />}>
            <table className="w-full table-fixed border-collapse">
              <colgroup>
                <col className="w-[122px]" />
                <col className="w-[50px]" />
                <col className="w-[58px]" />
                <col />
              </colgroup>
              <thead>
                <tr>
                  <Th>Name</Th>
                  <Th className="justify-end">Size</Th>
                  <Th>Type</Th>
                  <Th className="border-r-0">Modified</Th>
                </tr>
              </thead>
              <tbody>
                {leftFiles.map(([name, size, date, selected]) => (
                  <tr key={name} className="h-[17px] leading-[15px] whitespace-nowrap">
                    <td className="py-0 pl-1 pr-0">
                      <div className="flex h-[17px] items-center gap-px">
                        <FileIcon />
                        <span className={`h-[17px] pl-[2px] pr-1 pt-[2px] ${selected ? "bg-[#bdbdbd]" : ""}`}>{name}</span>
                      </div>
                    </td>
                    <td className="pb-0 pl-0 pr-[6px] pt-[2px] text-right">{size}</td>
                    <td className="pb-0 pl-[6px] pr-0 pt-[2px]">File</td>
                    <td className="overflow-hidden pb-0 pl-[6px] pr-0 pt-[2px]">{date}</td>
                  </tr>
                ))}
              </tbody>
            </table>
          </Pane>
          <Pane title="D:\Opus6" gradient="bg-linear-to-r from-[#f76b08] to-[#ffb542]" basis="basis-[297px]" scroll={<HScroll thumb="grow-[144]" rest="grow-[117]" />}>
            <table className="w-full table-fixed border-collapse">
              <colgroup>
                <col className="w-[160px]" />
                <col className="w-[64px]" />
                <col />
              </colgroup>
              <thead>
                <tr>
                  <Th className="justify-between">
                    <span>Name</span>
                    <span className="mr-[6px]">
                      <Art w={10} h={9} smooth>
                        <path d="M0.500 0.500H9.500L5 8.500Z" fill="none" stroke="#7b7b7b" />
                        <path d="M5 8.500L9.500 0.500" stroke="#fff" />
                      </Art>
                    </span>
                  </Th>
                  <Th className="justify-end">Size</Th>
                  <Th className="border-r-0">Type</Th>
                </tr>
              </thead>
              <tbody>
                {rightFiles.map((f) => (
                  <tr key={f.name} className={`h-[17px] leading-[15px] whitespace-nowrap ${f.tone}`}>
                    <td className="py-0 pl-[2px] pr-0">
                      <div className="flex h-[17px] items-center gap-[3px]">
                        {f.icon}
                        <span className="pt-[2px]">{f.name}</span>
                      </div>
                    </td>
                    <td className="pb-0 pl-0 pr-[5px] pt-[2px] text-right">{f.size}</td>
                    <td className="overflow-hidden pb-0 pl-[6px] pr-0 pt-[2px]">{f.type}</td>
                  </tr>
                ))}
              </tbody>
            </table>
          </Pane>
        </main>

        <Bar className="h-[46px]" label="Launch">
          <Launcher label="C:\" className="w-[25px]"><OutlinedDrive /></Launcher>
          <Launcher label="D:\" className="w-[25px]"><OutlinedDrive /></Launcher>
          <Sep />
          <Launcher label="A:\" className="w-[25px]"><FloppyDrive /></Launcher>
          <Launcher label="E:\" className="w-[25px]"><CdDrive /></Launcher>
          <Sep />
          <Launcher label="NOTEPAD"><Notepad /></Launcher>
          <Launcher label="Backup"><Backup /></Launcher>
          <Launcher label="netscape"><Netscape /></Launcher>
          <Launcher label="C/C++"><CppIcon /></Launcher>
          <Launcher label="Word"><WordIcon /></Launcher>
          <Sep />
          <Launcher label="Reselect"><Reselect /></Launcher>
        </Bar>

        <Bar className="h-[30px]" label="Location">
          <Tool label="Go back"><BackArrow /></Tool>
          <Tool label="Go forward"><ForwardArrow /></Tool>
          <Sep />
          <label htmlFor="location" className="w-[59px] text-center">
            Location
          </label>
          <div className="mr-[2px] flex h-[22px] min-w-0 flex-1 border border-t-[#7b7b7b] border-l-[#7b7b7b] border-r-white border-b-white">
            <div className="flex min-w-0 flex-1 items-center border border-t-black border-l-black border-r-[#bdbdbd] border-b-[#bdbdbd] bg-white">
              <span className="pl-px">
                <Folder />
              </span>
              <select id="location" defaultValue="System" className="h-full min-w-0 flex-1 appearance-none bg-white pl-1 outline-none">
                <option>System</option>
              </select>
              <span aria-hidden="true" className={`${raised} h-full w-[13px]`}>
                <TriDown />
              </span>
            </div>
          </div>
        </Bar>

        <footer className="flex h-5 shrink-0 gap-[2px] pt-[2px]">
          <div className="w-[240px] border border-t-[#7b7b7b] border-l-[#7b7b7b] border-r-white border-b-white" />
          <div className="flex flex-1 items-end justify-end border border-t-[#7b7b7b] border-l-[#7b7b7b] border-r-white border-b-white">
            <Art w={12} h={12}>
              <path d="M0 12L12 0M4 12L12 4M8 12L12 8" stroke="#fff" strokeWidth="1" />
              <path d="M1.500 12L12 1.500M5.500 12L12 5.500M9.500 12L12 9.500" stroke="#7b7b7b" strokeWidth="2" />
            </Art>
          </div>
        </footer>
      </div>

      <div className="pointer-events-none absolute left-[495px] top-[545px]">
        <Pixels
          palette={{ k: "#000", w: "#fff" }}
          rows={[
            "k..........",
            "kk.........",
            "kwk........",
            "kwwk.......",
            "kwwwk......",
            "kwwwwk.....",
            "kwwwwwk....",
            "kwwwwwwk...",
            "kwwwwwwwk..",
            "kwwwwwwwwk.",
            "kwwwwwkkkkk",
            "kwwkwwk....",
            "kwk.kwwk...",
            "kk..kwwk...",
            "k....kwwk..",
            ".....kwwk..",
            "......kwwk.",
            "......kwwk.",
            ".......kk..",
          ]}
        />
      </div>
    </div>
  );
}
